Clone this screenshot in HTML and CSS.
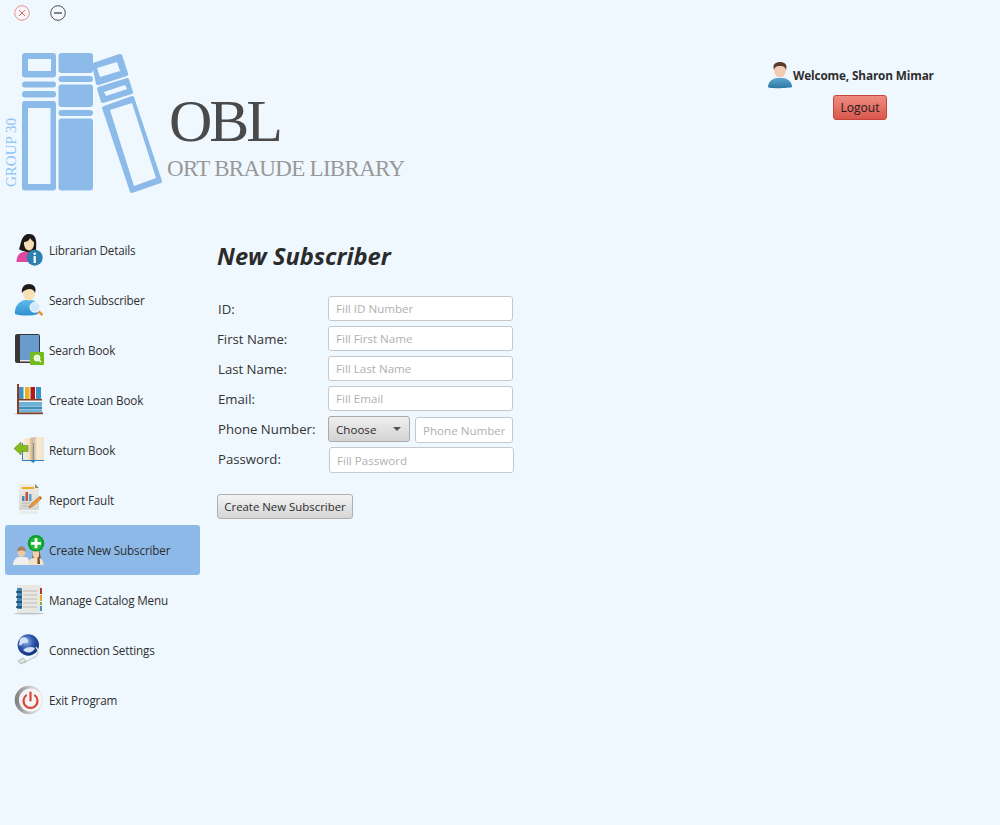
FILE: index.html
```html
<!DOCTYPE html>
<html lang="en">
<head>
<meta charset="utf-8">
<title>OBL - New Subscriber</title>
<link rel="stylesheet" href="styles.css">
</head>
<body>
<div class="app">
  <div class="titlebar">
    <svg class="win-btn" viewBox="0 0 16 16"><circle cx="8" cy="8" r="7.300" fill="#f4f8fb" stroke="#e8908a"/><path d="M5 5l6 6M11 5l-6 6" stroke="#e4655c" stroke-width="1" fill="none"/></svg>
    <svg class="win-btn" viewBox="0 0 16 16"><circle cx="8" cy="8" r="7.300" fill="#f4f8fb" stroke="#4a5058"/><rect x="4" y="7" width="8" height="2" fill="#7d848c"/></svg>
  </div>
  <header class="header">
    <svg class="logo" viewBox="0 26 420 199">
      <g fill="#8dbbe9">
        <path fill-rule="evenodd" d="M25 53h28a3 3 0 0 1 3 3v18.500a3 3 0 0 1-3 3H25a3 3 0 0 1-3-3V56a3 3 0 0 1 3-3zM28 59v12h23V59z"/>
        <rect x="22" y="81.500" width="34" height="6" rx="3"/>
        <rect x="22" y="91" width="34" height="6.500" rx="3"/>
        <path fill-rule="evenodd" d="M25 101h28a3 3 0 0 1 3 3v83.500a3 3 0 0 1-3 3H25a3 3 0 0 1-3-3V104a3 3 0 0 1 3-3zM28 108v76h22.500v-76z"/>
        <rect x="58.500" y="53" width="34.500" height="20" rx="3"/>
        <rect x="58.500" y="76" width="34.500" height="6" rx="3"/>
        <rect x="58.500" y="84.500" width="34.500" height="22.500" rx="3"/>
        <rect x="58.500" y="110" width="34.500" height="6" rx="3"/>
        <rect x="58.500" y="118.500" width="34.500" height="72" rx="3"/>
        <path fill-rule="evenodd" d="M93 63l26-9q2-.500 3 1l6 18q.500 2-1 3l-28 9q-2 .500-3-1l-4-19zM97 68l3 9 20-6-3-9z"/>
        <path fill-rule="evenodd" d="M98 87l29-9q1.500 0 2 1l4 13q0 1.500-1 2l-29 9q-1.500 0-2-1l-4-13q0-1.500 1-2zM104 92l2 4 21-7-2-4z"/>
        <path fill-rule="evenodd" d="M104 106l28-10q1.500 0 2 1l28 84q0 1.500-1 2l-29 10q-1.500 0-2-1l-28-84q0-1.500 2-2zM110 110l24 76 22-8-24-75z"/>
      </g>
      <text class="logo-group" transform="translate(16 187) rotate(-90)">GROUP 30</text>
      <text class="logo-title" x="169" y="141">OBL</text>
      <text class="logo-sub" x="167" y="176">ORT BRAUDE LIBRARY</text>
    </svg>
    <div class="user">
      <div class="welcome">
        <svg class="avatar" viewBox="0 0 26 28">
          <defs><linearGradient id="ub" x1="0" y1="0" x2="0" y2="1"><stop offset="0" stop-color="#5aa6cc"/><stop offset="1" stop-color="#2c78a2"/></linearGradient></defs>
          <path d="M1 26c0-5 4-8 8-9h8c4 1 8 4 8 9 0 1-24 2-24 0z" fill="url(#ub)"/>
          <ellipse cx="13" cy="9" rx="6" ry="7.500" fill="#f3cdb2"/>
          <path d="M7 9C5 3 9 1 13 1s8 2 6 8c-1-3-2-4-6-4s-5 1-6 4z" fill="#5b3d2c"/>
        </svg>
        <span>Welcome, Sharon Mimar</span>
      </div>
      <button class="logout" type="button">Logout</button>
    </div>
  </header>
  <div class="main">
    <nav class="sidebar">
      <a class="nav-item">
        <svg class="nav-icon" viewBox="0 0 32 32">
          <path d="M3.500 28c0-6 3-10 8-10h6c3 0 4 4 4 10z" fill="#e0479e"/>
          <path d="M6 15C8 11 8 0 16 0c7 0 8 6 7 16-2 3-12 3-17-1z" fill="#1c1a1a"/>
          <ellipse cx="16" cy="10" rx="5" ry="6.500" fill="#f7deb4"/>
          <path d="M11 8c2 0 5-1 6-4 1 2 3 3 4 4V3h-10z" fill="#1c1a1a"/>
          <circle cx="21.700" cy="23.700" r="8" fill="#2b80ad"/>
          <circle cx="21.700" cy="19.700" r="1.300" fill="#fff"/>
          <rect x="20.600" y="22" width="2.200" height="7" fill="#fff"/>
        </svg>
        <span>Librarian Details</span>
      </a>
      <a class="nav-item">
        <svg class="nav-icon" viewBox="0 0 32 32">
          <defs><linearGradient id="sb" x1="0" y1="0" x2="0" y2="1"><stop offset="0" stop-color="#5fbdeb"/><stop offset="1" stop-color="#2f8fd0"/></linearGradient></defs>
          <path d="M2 30c-1-7 4-13 10-14h7c5 1 6 6 6 14-6 2-17 2-23 0z" fill="url(#sb)"/>
          <ellipse cx="16" cy="9" rx="6" ry="7.500" fill="#f8e1b4"/>
          <path d="M9 9C8 3 12 0 16 0s8 3 6 9c-1-3-3-4-5-4-3 0-6 1-8 4z" fill="#1c1c1c"/>
          <path d="M25 27l4.500 4" stroke="#e8922e" stroke-width="2.500"/>
          <circle cx="22" cy="23.300" r="4.800" fill="#cfeafa" stroke="#e8f4fb" stroke-width="1.500"/>
        </svg>
        <span>Search Subscriber</span>
      </a>
      <a class="nav-item">
        <svg class="nav-icon" viewBox="0 0 32 32">
          <rect x="2" y="0" width="25" height="29" rx="2" fill="#3a3634"/>
          <rect x="7" y="1" width="19" height="25" fill="#6a9bcd"/>
          <rect x="7" y="26" width="19" height="1.500" fill="#e8e8e8"/>
          <rect x="17" y="18" width="14" height="13" rx="1" fill="#74bb1c"/>
          <circle cx="24" cy="24" r="3" fill="#e6f6cf" stroke="#fff"/>
          <path d="M26 26l2 2" stroke="#fff" stroke-width="1.500"/>
        </svg>
        <span>Search Book</span>
      </a>
      <a class="nav-item">
        <svg class="nav-icon" viewBox="0 0 32 32">
          <ellipse cx="16" cy="30" rx="15" ry="1" fill="#c9ced2"/>
          <rect x="4" y="0" width="2" height="30" fill="#8a3d22"/>
          <rect x="6" y="3" width="4.500" height="12" fill="#3c94c4"/>
          <rect x="12" y="3" width="4.500" height="12" fill="#edb21f"/>
          <rect x="17.500" y="3" width="4.500" height="12" fill="#b2191b"/>
          <rect x="23" y="3" width="5" height="12" fill="#3c94c4"/>
          <rect x="6" y="15" width="23" height="1.500" fill="#8a3d22"/>
          <rect x="6" y="18" width="23" height="4" fill="#6db2d2"/>
          <rect x="6" y="22.500" width="23" height="3" fill="#3f8db6"/>
          <rect x="6" y="26" width="23" height="2.500" fill="#6db2d2"/>
          <rect x="5" y="28.500" width="25" height="1.500" fill="#8a3d22"/>
        </svg>
        <span>Create Loan Book</span>
      </a>
      <a class="nav-item">
        <svg class="nav-icon" viewBox="0 0 32 32">
          <defs>
            <linearGradient id="pl" x1="0" y1="0" x2="1" y2="0"><stop offset="0" stop-color="#f9ecd8"/><stop offset=".6" stop-color="#f6e2c6"/><stop offset="1" stop-color="#c9a57c"/></linearGradient>
            <linearGradient id="pr" x1="0" y1="0" x2="1" y2="0"><stop offset="0" stop-color="#cdae88"/><stop offset=".35" stop-color="#f8ecd9"/><stop offset="1" stop-color="#f3e2c8"/></linearGradient>
          </defs>
          <path d="M9 9h22v18H22l-1 1.500h-2L18 27H9z" fill="#2f7fc0"/>
          <path d="M10 5l10-1.500V26l-10 0z" fill="url(#pl)"/>
          <path d="M20.500 3h10.500v23H20.500z" fill="url(#pr)"/>
          <path d="M1 14.500L8 8v3.500h7v6H8V21z" fill="#86bb1d" stroke="#5e8f10" stroke-width=".6"/>
        </svg>
        <span>Return Book</span>
      </a>
      <a class="nav-item">
        <svg class="nav-icon" viewBox="0 0 32 32">
          <defs><linearGradient id="rf" x1="0" y1="0" x2="0" y2="1"><stop offset="0" stop-color="#efeee6"/><stop offset="1" stop-color="#d5d6d0"/></linearGradient></defs>
          <path d="M6 0h16l4 4v22H6z" fill="url(#rf)"/>
          <path d="M22 0l4 4h-4z" fill="#8b8b86"/>
          <rect x="9" y="3" width="12" height="2" fill="#eeaa1e"/>
          <rect x="9" y="12" width="2.500" height="5" fill="#4d86b8"/>
          <rect x="12.500" y="8" width="2.500" height="9" fill="#c54c3b"/>
          <rect x="16" y="10" width="2.500" height="7" fill="#5d9fd0"/>
          <path d="M9 19h8M9 22h10" stroke="#b9b8b0"/>
          <path d="M16 24l2-4 8-7 2 2-8 7z" fill="#ee9d2b" stroke="#a8481f" stroke-width=".5"/>
          <path d="M26 13l1-1 2 2-1 1z" fill="#c94a32"/>
          <rect x="7" y="27" width="18" height="3" fill="#e8ebec"/>
        </svg>
        <span>Report Fault</span>
      </a>
      <a class="nav-item active">
        <svg class="nav-icon" viewBox="0 0 32 32">
          <path d="M0 31c0-5 3-8 6-8h6c3 0 5 3 5 8z" fill="#f0efeb"/>
          <ellipse cx="8.500" cy="18" rx="4" ry="5" fill="#eec9a6"/>
          <path d="M4.500 18c-1-4 2-5.500 4-5.500s5 1.500 4 5.500c-1-2-7-2-8 0z" fill="#a58064"/>
          <path d="M19 28c1-5 0-13 4-14 5 0 4 9 5 14z" fill="#75482a"/>
          <path d="M15.500 31c0-4 2-7 5-7h5c3 0 5 3 5 7z" fill="#f3e2c6"/>
          <ellipse cx="23" cy="20" rx="3.200" ry="4.800" fill="#f2cfa8"/>
          <path d="M24.500 24l2-1 .5 7h-2.500z" fill="#75482a"/>
          <circle cx="23" cy="9.300" r="8.300" fill="#0a9a26"/>
          <circle cx="23" cy="9.300" r="6.500" fill="#1fb83a"/>
          <path d="M23 4.300v10M18 9.300h10" stroke="#fff" stroke-width="2.800"/>
        </svg>
        <span>Create New Subscriber</span>
      </a>
      <a class="nav-item">
        <svg class="nav-icon" viewBox="0 0 32 32">
          <ellipse cx="16" cy="29.500" rx="15" ry="1" fill="#c3c6c8"/>
          <rect x="4" y="1" width="24" height="27" rx="1" fill="#e8e7e2"/>
          <path d="M10 7h14M10 11h14M10 15h14M10 19h14M10 23h14" stroke="#bcbcb8"/>
          <rect x="4" y="4" width="5" height="21" rx="1" fill="#3d87b9"/>
          <path d="M3 8h6M3 13h6M3 18h6M3 23h6" stroke="#26475f" stroke-width="1.500"/>
          <rect x="27" y="4" width="2" height="6" fill="#b53a2e"/>
          <rect x="27" y="11" width="2" height="6" fill="#e5a61f"/>
          <rect x="27" y="18" width="2" height="3" fill="#7fb42c"/>
          <rect x="27" y="22" width="2" height="5" fill="#4793c8"/>
        </svg>
        <span>Manage Catalog Menu</span>
      </a>
      <a class="nav-item">
        <svg class="nav-icon" viewBox="0 0 32 32">
          <defs><radialGradient id="gl" cx=".4" cy=".35" r=".7"><stop offset="0" stop-color="#9db7ea"/><stop offset=".5" stop-color="#2b55ad"/><stop offset="1" stop-color="#0f2a72"/></radialGradient></defs>
          <circle cx="15.300" cy="11" r="10.700" fill="url(#gl)"/>
          <path d="M7 5c3-3 7-2 8 1s-2 3-4 3-3 4-5 2zM10 16c3-3 8-4 12-2-2 5-8 6-12 2z" fill="#d5e0f4"/>
          <path d="M23 13c3 3 2 9-1 10-4 2-7 3-11 6" fill="none" stroke="#cfd4da" stroke-width="1.500"/>
          <path d="M5 27l5-3 3 3-5 3z" fill="#e8e4c8" stroke="#84a4c0" stroke-width=".7"/>
        </svg>
        <span>Connection Settings</span>
      </a>
      <a class="nav-item">
        <svg class="nav-icon" viewBox="0 0 32 32">
          <defs><linearGradient id="ex" x1="0" y1="0" x2="1" y2="0"><stop offset="0" stop-color="#7b7b7b"/><stop offset=".5" stop-color="#c4c4c4"/><stop offset="1" stop-color="#eeeeee"/></linearGradient></defs>
          <circle cx="16" cy="16" r="14.300" fill="url(#ex)"/>
          <circle cx="17.500" cy="16" r="11.500" fill="#f5f5f5"/>
          <path d="M13 11.500a7 7 0 1 0 9 0" fill="none" stroke="#d9463a" stroke-width="2.200" stroke-linecap="round"/>
          <path d="M17.500 8.500v8" stroke="#d9463a" stroke-width="2.200" stroke-linecap="round"/>
        </svg>
        <span>Exit Program</span>
      </a>
    </nav>
    <section class="content">
      <h1 class="title">New Subscriber</h1>
      <form class="form">
        <div class="row"><label class="label">ID:</label><input class="field" placeholder="Fill ID Number"></div>
        <div class="row"><label class="label label-tight">First Name:</label><input class="field" placeholder="Fill First Name"></div>
        <div class="row"><label class="label">Last Name:</label><input class="field" placeholder="Fill Last Name"></div>
        <div class="row"><label class="label">Email:</label><input class="field" placeholder="Fill Email"></div>
        <div class="row row-phone">
          <label class="label">Phone Number:</label>
          <div class="choose"><span>Choose</span><i class="arrow"></i></div>
          <input class="field field-phone" placeholder="Phone Number">
        </div>
        <div class="row row-pass"><label class="label label-pass">Password:</label><input class="field field-pass" placeholder="Fill Password"></div>
        <button class="submit" type="button">Create New Subscriber</button>
      </form>
    </section>
  </div>
</div>
</body>
</html>
```
FILE: styles.css
```css
* { box-sizing: border-box; }
html, body { margin: 0; padding: 0; }
body {
  background: #f0f8ff;
  font-family: "Open Sans", "Noto Sans", sans-serif;
  color: #333;
}
.app { width: 1000px; height: 825px; overflow: hidden; }

.titlebar { display: flex; gap: 20px; height: 26px; padding: 5px 0 0 14px; }
.win-btn { width: 16px; height: 16px; display: block; }

.header { display: flex; justify-content: space-between; height: 199px; }
.logo { width: 420px; height: 199px; display: block; }
.logo-group { font: 15px "Liberation Serif", serif; fill: #8ec4f5; }
.logo-title { font: 60px "Liberation Serif", serif; fill: #4a4a4a; letter-spacing: -3px; }
.logo-sub { font: 23px "Liberation Serif", serif; fill: #999; letter-spacing: -0.7px; }

.user { width: 233px; display: flex; flex-direction: column; align-items: flex-start; padding-top: 35px; }
.welcome { display: flex; align-items: center; gap: 0; font-size: 11.800px; letter-spacing: -0.15px; font-weight: 700; color: #2e2e2e; white-space: nowrap; }
.avatar { width: 26px; height: 28px; display: block; }
.logout {
  margin: 6px 0 0 66px;
  width: 54px; height: 25px; padding: 0;
  border: 1px solid #c9453c; border-radius: 3px;
  background: linear-gradient(#f08c80, #d9574c);
  font: 12px "Open Sans", sans-serif; color: #1c1c1c;
}

.main { display: flex; }
.sidebar { width: 217px; padding-left: 5px; display: flex; flex-direction: column; }
.nav-item { width: 195px; height: 50px; padding-left: 8px; display: flex; align-items: center; gap: 4px; font-size: 11.700px; letter-spacing: -0.15px; color: #2f2f2f; border-radius: 3px; }
.nav-item.active { background: #8db9e8; }
.nav-icon { width: 32px; height: 32px; display: block; flex: none; overflow: visible; }

.content { padding-top: 16px; }
.title { margin: 0 0 25px; height: 30px; font-size: 23.700px; line-height: 30px; font-weight: 700; font-style: italic; color: #2b2b2b; }

.form { display: flex; flex-direction: column; gap: 5px; align-items: flex-start; }
.row { display: flex; align-items: center; height: 25px; }
.row-phone { height: 26px; align-items: flex-start; }
.row-pass { height: 26px; }
.label { width: 111px; padding-left: 1px; font-size: 13.200px; color: #333; white-space: nowrap; }
.label-tight { padding-left: 0; }
.row-phone .label { line-height: 26px; }
.label-pass { width: 112px; position: relative; top: -1px; }

.field {
  width: 185px; height: 25px; padding: 0 7px;
  background: #fff; border: 1px solid #c6c9cc; border-radius: 3px;
  font: 11.600px "Open Sans", sans-serif; color: #333; outline: none;
}
.field::placeholder { color: #b0b0b0; opacity: 1; }
.choose {
  width: 82px; height: 26px; padding: 0 7px;
  display: flex; align-items: center; justify-content: space-between;
  background: linear-gradient(#efefef, #d3d3d3);
  border: 1px solid #a9a9a9; border-radius: 3px;
  font-size: 11.600px; color: #2c2c2c;
}
.arrow { width: 0; height: 0; margin-right: 1px; border: 4.500px solid transparent; border-top: 4px solid #555; border-bottom: 0; }
.field-phone { width: 98px; height: 26px; margin: 1px 0 0 5px; }
.field-pass { height: 26px; }
.submit {
  margin-top: 16px;
  width: 136px; height: 25px; padding: 0;
  background: linear-gradient(#f3f3f3, #d6d6d6);
  border: 1px solid #b0b0b0; border-radius: 3px;
  font: 11.400px "Open Sans", sans-serif; color: #2c2c2c;
}
```
